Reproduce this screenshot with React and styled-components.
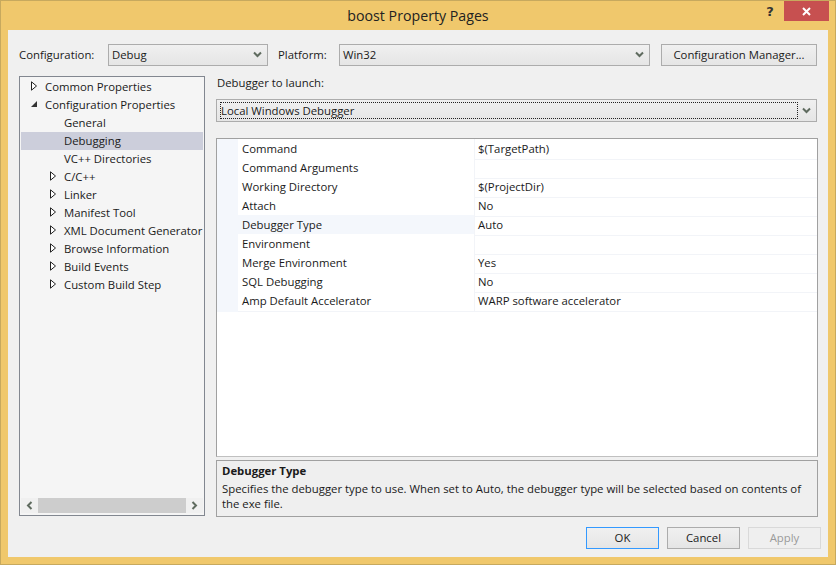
import styled, { createGlobalStyle } from 'styled-components';

const GlobalStyle = createGlobalStyle`
  html, body {
    margin: 0;
    padding: 0;
    background: #f0c86c;
  }
  * {
    box-sizing: border-box;
  }
`;

const Window = styled.div`
  width: 836px;
  height: 565px;
  display: flex;
  flex-direction: column;
  background: #f0c86c;
  border: 1px solid #c7a95e;
  font-family: "Open Sans", "Noto Sans", sans-serif;
  font-size: 11.35px;
  color: #1a1a1a;
  overflow: hidden;
`;

const TitleBar = styled.div`
  height: 29px;
  flex: none;
  position: relative;
  display: flex;
  align-items: center;
  justify-content: center;
  font-size: 14.2px;
  color: #222;
`;

const TitleButtons = styled.div`
  position: absolute;
  top: 0;
  right: 6px;
  display: flex;
  align-items: flex-start;
`;

const HelpButton = styled.div`
  width: 28px;
  height: 20px;
  display: flex;
  align-items: center;
  justify-content: center;
  font-family: "DejaVu Sans", sans-serif;
  font-weight: 700;
  font-size: 13px;
  color: #333;
`;

const CloseButton = styled.div`
  width: 45px;
  height: 20px;
  background: #c75050;
  display: flex;
  align-items: center;
  justify-content: center;
`;

const Client = styled.div`
  flex: 1;
  margin: 0 7px 7px 7px;
  padding: 14px 11px 0 11px;
  background: #f0f0f0;
  display: flex;
  flex-direction: column;
  min-height: 0;
`;

const TopRow = styled.div`
  height: 22px;
  display: flex;
  align-items: center;
  flex: none;
`;

const Label = styled.span`
  flex: none;
  width: ${(p) => p.$width}px;
  padding-left: ${(p) => p.$inset || 0}px;
  margin-top: -2px;
`;

const Select = styled.div`
  height: ${(p) => p.$height || 22}px;
  width: ${(p) => (p.$width ? `${p.$width}px` : 'auto')};
  flex: none;
  display: flex;
  align-items: center;
  justify-content: space-between;
  padding: 0 5px 1px 3px;
  border: 1px solid #acacac;
  background: linear-gradient(#f0f0f0, #e5e5e5);
`;

const FocusText = styled.div`
  flex: 1;
  height: 17px;
  line-height: 15px;
  margin: 1px 4px 0 0;
  border: 1px dotted #222;
`;

const Chevron = () => (
  <svg width="9" height="7" viewBox="0 0 9 7">
    <path d="M1 1.5 L4.5 5 L8 1.5" fill="none" stroke="#5f6b5f" strokeWidth="2" />
  </svg>
);

const Button = styled.div`
  height: 22px;
  width: ${(p) => p.$width}px;
  flex: none;
  margin-left: ${(p) => p.$offset || 0}px;
  padding-bottom: 1px;
  display: flex;
  align-items: center;
  justify-content: center;
  background: ${(p) => (p.$disabled ? '#efefef' : 'linear-gradient(#f0f0f0, #e5e5e5)')};
  border: 1px solid ${(p) => (p.$default ? '#3399ff' : p.$disabled ? '#d9d9d9' : '#acacac')};
  color: ${(p) => (p.$disabled ? '#9a9a9a' : '#1a1a1a')};
`;

const Body = styled.div`
  flex: none;
  height: 440px;
  margin-top: 10px;
  display: flex;
  gap: 11px;
`;

const TreePanel = styled.div`
  width: 186px;
  flex: none;
  display: flex;
  flex-direction: column;
  border: 1px solid #828790;
  background: #f5f5f5;
  padding: 1px;
`;

const TreeList = styled.div`
  flex: 1;
  overflow: hidden;
`;

const TreeRow = styled.div`
  height: 18px;
  padding-bottom: 2px;
  display: flex;
  align-items: center;
  white-space: nowrap;
  padding-left: ${(p) => p.$indent}px;
  background: ${(p) => (p.$selected ? '#cccedb' : 'transparent')};
`;

const Arrow = styled.span`
  width: 12px;
  margin-right: 3px;
  flex: none;
  display: flex;
  align-items: center;
`;

const Scrollbar = styled.div`
  height: 15px;
  flex: none;
  display: flex;
  align-items: center;
  justify-content: space-between;
  background: #f0f0f0;
  margin-bottom: 1px;
`;

const ScrollEnd = styled.div`
  width: 17px;
  display: flex;
  justify-content: center;
`;

const ScrollThumb = styled.div`
  flex: 1;
  height: 15px;
  background: #cdcdcd;
`;

const RightPane = styled.div`
  flex: 1;
  min-width: 0;
  display: flex;
  flex-direction: column;
`;

const FieldLabel = styled.div`
  height: 23px;
  margin-top: -1px;
  margin-bottom: 1px;
  padding-left: 1px;
  line-height: 15px;
  flex: none;
`;

const Grid = styled.div`
  margin: 16px -1px 0 0;
  height: 319px;
  flex: none;
  background: #fff;
  border: 1px solid #a0a0a0;
  border-bottom-color: #c0c0c0;
`;

const PropRow = styled.div`
  height: 19px;
  display: grid;
  grid-template-columns: 21px 236px 1fr;
  line-height: 20px;
`;

const Stripe = styled.div`
  background: #f4f7fc;
`;

const PropName = styled.div`
  padding-left: 4px;
  background: ${(p) => (p.$active ? '#f4f7fc' : '#fff')};
  border-bottom: 1px solid #f2f4f8;
`;

const PropValue = styled.div`
  padding-left: 3px;
  border-left: 1px solid #f2f4f8;
  border-bottom: 1px solid #f2f4f8;
`;

const Description = styled.div`
  margin: 3px -1px 0 0;
  height: 57px;
  flex: none;
  padding: 2px 5px;
  border: 1px solid #a0a0a0;
  line-height: 15px;
  background: #efefef;
`;

const DescriptionTitle = styled.div`
  font-weight: 700;
  margin-bottom: 3px;
`;

const Footer = styled.div`
  margin-top: 11px;
  margin-right: -4px;
  display: flex;
  justify-content: flex-end;
  gap: 8px;
  flex: none;
`;

const Collapsed = () => (
  <svg width="8" height="10" viewBox="0 0 8 10">
    <path d="M1.5 0.8 L6.5 5 L1.5 9.2 Z" fill="#fff" stroke="#222" strokeWidth="1" />
  </svg>
);

const Expanded = () => (
  <svg width="8" height="8" viewBox="0 0 8 8">
    <path d="M7 1 V7 H1 Z" fill="#333" />
  </svg>
);

const tree = [
  { label: 'Common Properties', indent: 9, arrow: 'closed' },
  { label: 'Configuration Properties', indent: 9, arrow: 'open' },
  { label: 'General', indent: 43 },
  { label: 'Debugging', indent: 43, selected: true },
  { label: 'VC++ Directories', indent: 43 },
  { label: 'C/C++', indent: 28, arrow: 'closed' },
  { label: 'Linker', indent: 28, arrow: 'closed' },
  { label: 'Manifest Tool', indent: 28, arrow: 'closed' },
  { label: 'XML Document Generator', indent: 28, arrow: 'closed' },
  { label: 'Browse Information', indent: 28, arrow: 'closed' },
  { label: 'Build Events', indent: 28, arrow: 'closed' },
  { label: 'Custom Build Step', indent: 28, arrow: 'closed' },
];

const props = [
  ['Command', '$(TargetPath)'],
  ['Command Arguments', ''],
  ['Working Directory', '$(ProjectDir)'],
  ['Attach', 'No'],
  ['Debugger Type', 'Auto', true],
  ['Environment', ''],
  ['Merge Environment', 'Yes'],
  ['SQL Debugging', 'No'],
  ['Amp Default Accelerator', 'WARP software accelerator'],
];

function App() {
  return (
    <>
      <GlobalStyle />
      <Window>
        <TitleBar>
          boost Property Pages
          <TitleButtons>
            <HelpButton>?</HelpButton>
            <CloseButton>
              <svg width="9" height="9" viewBox="0 0 9 9">
                <path d="M1 1 L8 8 M8 1 L1 8" stroke="#fff" strokeWidth="2" />
              </svg>
            </CloseButton>
          </TitleButtons>
        </TitleBar>
        <Client>
          <TopRow>
            <Label $width={89}>Configuration:</Label>
            <Select $width={160}>
              Debug
              <Chevron />
            </Select>
            <Label $width={71} $inset={10}>Platform:</Label>
            <Select $width={311}>
              Win32
              <Chevron />
            </Select>
            <Button $width={156} $offset={11}>Configuration Manager...</Button>
          </TopRow>
          <Body>
            <TreePanel>
              <TreeList>
                {tree.map((item) => (
                  <TreeRow key={item.label} $indent={item.indent} $selected={item.selected}>
                    {item.arrow && (
                      <Arrow>
                        {item.arrow === 'open' ? <Expanded /> : <Collapsed />}
                      </Arrow>
                    )}
                    {item.label}
                  </TreeRow>
                ))}
              </TreeList>
              <Scrollbar>
                <ScrollEnd>
                  <svg width="7" height="9" viewBox="0 0 7 9">
                    <path d="M5.5 1 L2 4.5 L5.5 8" fill="none" stroke="#5f6b5f" strokeWidth="2" />
                  </svg>
                </ScrollEnd>
                <ScrollThumb />
                <ScrollEnd>
                  <svg width="7" height="9" viewBox="0 0 7 9">
                    <path d="M1.5 1 L5 4.5 L1.5 8" fill="none" stroke="#5f6b5f" strokeWidth="2" />
                  </svg>
                </ScrollEnd>
              </Scrollbar>
            </TreePanel>
            <RightPane>
              <FieldLabel>Debugger to launch:</FieldLabel>
              <Select $height={23}>
                <FocusText>Local Windows Debugger</FocusText>
                <Chevron />
              </Select>
              <Grid>
                {props.map(([name, value, active]) => (
                  <PropRow key={name}>
                    <Stripe />
                    <PropName $active={active}>{name}</PropName>
                    <PropValue>{value}</PropValue>
                  </PropRow>
                ))}
              </Grid>
              <Description>
                <DescriptionTitle>Debugger Type</DescriptionTitle>
                Specifies the debugger type to use. When set to Auto, the debugger type will be selected based on contents of the exe file.
              </Description>
            </RightPane>
          </Body>
          <Footer>
            <Button $width={73} $default>OK</Button>
            <Button $width={73}>Cancel</Button>
            <Button $width={73} $disabled>Apply</Button>
          </Footer>
        </Client>
      </Window>
    </>
  );
}

export default App;
